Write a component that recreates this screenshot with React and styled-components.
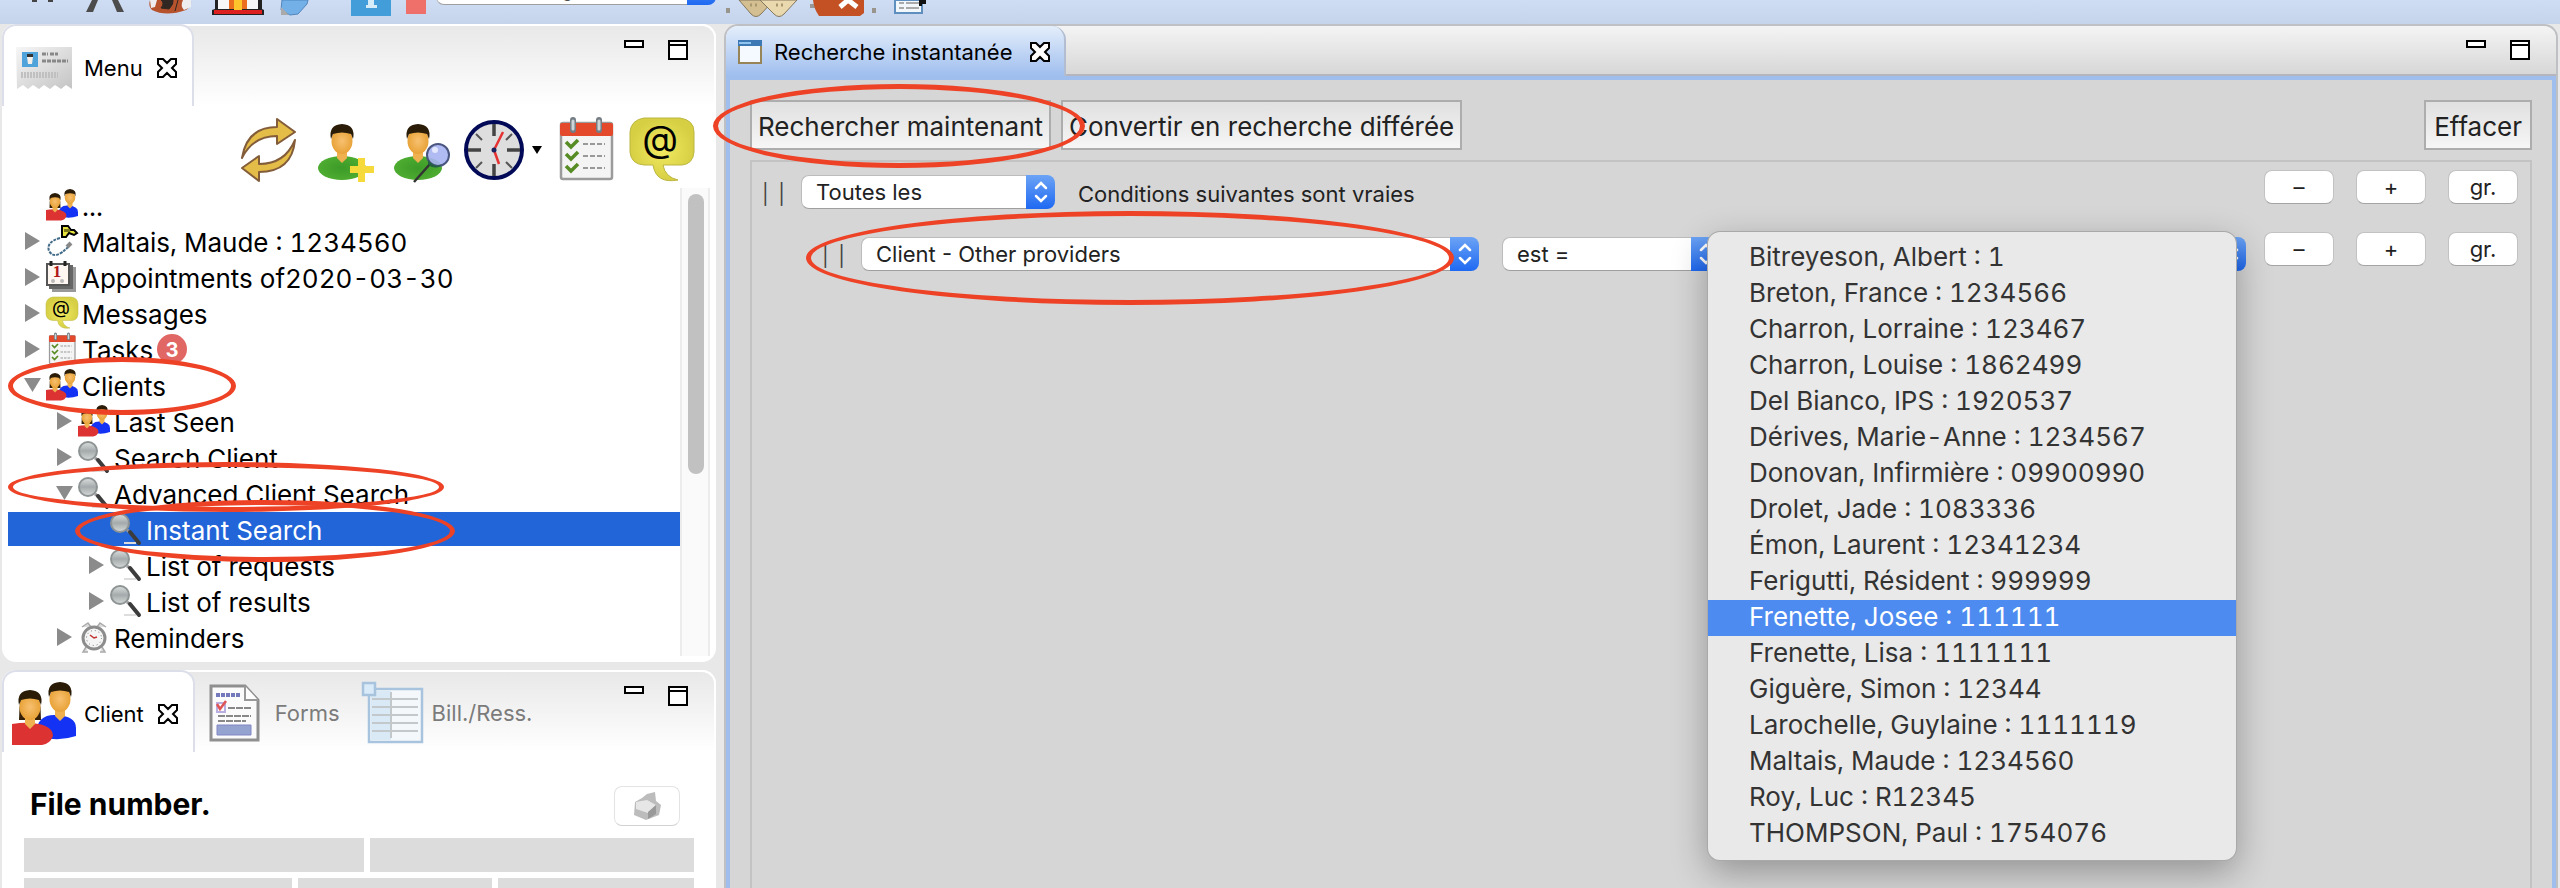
import React, { useState } from 'react';
import styled, { createGlobalStyle, css } from 'styled-components';

const GlobalStyle = createGlobalStyle`
    * {
        box-sizing: border-box;
    }

    body {
        margin: 0;
        background: #e8e8e8;
        color: #000;
        font-family: Inter, "Liberation Sans", sans-serif;
        font-size: 22px;
        line-height: 28px;
    }

    button, select {
        margin: 0;
        padding: 0;
        border: 0;
        background: none;
        color: inherit;
        font: inherit;
    }

    svg {
        display: block;
        flex: none;
        overflow: visible;
    }
`;

const Page = styled.div`
    display: flex;
    flex-direction: column;
    height: 100vh;
    overflow: hidden;
`;

const TopBar = styled.header`
    display: flex;
    flex: none;
    height: 24px;
    padding-left: 8px;
    overflow: hidden;
    background: linear-gradient(#cedcf4, #c5d4eb);
`;

const TopButton = styled.button`
    flex: none;
    width: ${props => props.$width || 64}px;
    height: 24px;
`;

const TopSelect = styled.div`
    display: flex;
    flex: none;
    width: 280px;
    height: 34px;
    margin-top: -29px;
`;

const Workbench = styled.div`
    display: flex;
    flex: 1;
    gap: 8px;
    min-height: 0;
    padding: 0 2px;
`;

const Sidebar = styled.aside`
    display: flex;
    flex: none;
    flex-direction: column;
    gap: 8px;
    width: 714px;
`;

const Panel = styled.section`
    flex: ${props => props.$grow ? '1' : 'none'};
    border-radius: ${props => props.$grow ? '14px 14px 0 0' : '14px'};
    background: #fff;
`;

const TabBar = styled.div`
    display: flex;
    height: 82px;
    border-top: 2px solid #fff;
    border-right: 2px solid #fff;
    border-radius: 14px 14px 0 0;
    background: linear-gradient(#e8e8e8, #fff);
`;

const Tab = styled.button`
    display: flex;
    align-items: center;
    gap: 8px;
    height: 82px;
    margin-top: -2px;
    padding: 4px 12px 0 8px;
    color: #7b7b7b;

    ${props => props.$active && css`
        padding: 4px 15px 0 8px;
        border: 2px solid #dcdfea;
        border-bottom: 0;
        border-radius: 14px 14px 0 0;
        background: #fff;
        color: #000;
    `}
`;

const CloseMark = styled.span`
    margin-left: 6px;
`;

const WindowButtons = styled.div`
    display: flex;
    gap: 24px;
    margin-left: auto;
    padding: 14px 26px 0 0;

    button {
        height: 20px;
    }
`;

const ActionBar = styled.div`
    display: flex;
    justify-content: flex-end;
    gap: 12px;
    padding: 12px 22px 6px 0;

    button {
        height: 64px;
    }
`;

const Caret = styled.button`
    width: 10px;
    margin-left: -6px;
`;

const TreeArea = styled.div`
    display: flex;
    padding: 0 6px 6px;
`;

const Tree = styled.ul`
    flex: 1;
    margin: 0;
    padding: 0;
    list-style: none;
`;

const TreeRow = styled.li`
    position: relative;
    display: flex;
    align-items: center;
    height: 36px;
    padding: 0 0 2px ${props => 16 + props.$level * 32}px;
    font-size: 26px;
    font-variant-numeric: tabular-nums;

    ${props => props.$selected && css`
        background: linear-gradient(#2265d9 34px, #fff 34px);
        color: #fff;
    `}
`;

const Twisty = styled.span`
    flex: none;
    width: 22px;
`;

const TreeLabel = styled.span`
    padding: 3px 0 0 4px;
    white-space: nowrap;
`;

const Badge = styled.span`
    width: 30px;
    height: 30px;
    margin-left: 4px;
    border-radius: 50%;
    background: #e06763;
    color: #fff;
    font-size: 20px;
    font-weight: 700;
    line-height: 32px;
    text-align: center;
`;

const ScrollTrack = styled.div`
    flex: none;
    width: 30px;
    padding: 6px 0 0 6px;
    border: solid #ececec;
    border-width: 0 2px;
    background: #fafafa;
`;

const ScrollThumb = styled.div`
    width: 16px;
    height: 280px;
    border-radius: 8px;
    background: #c1c1c1;
`;

const FileHeader = styled.div`
    display: flex;
    justify-content: space-between;
    padding: 34px 36px 12px 28px;
`;

const FileTitle = styled.h2`
    margin: 0;
    font-size: 30px;
    line-height: 36px;
`;

const PrintButton = styled.button`
    display: flex;
    align-items: center;
    justify-content: center;
    width: 66px;
    height: 40px;
    border: 1px solid #e3e3e3;
    border-bottom-color: #d2d2d2;
    border-radius: 8px;
    background: #fff;
`;

const FieldRow = styled.div`
    display: grid;
    grid-template-columns: ${props => props.$columns};
    gap: 6px;
    height: 34px;
    margin: 0 22px 6px;

    span {
        background: #dcdcdc;
    }
`;

const Editor = styled.main`
    display: flex;
    flex: 1;
    flex-direction: column;
    min-width: 0;
    border: 2px solid #bfc0c4;
    border-bottom: 0;
    border-radius: 14px 14px 0 0;
    background: #d6d6d6;
`;

const EditorTabs = styled.div`
    display: flex;
    flex: none;
    height: 50px;
    border-radius: 12px 12px 0 0;
    background: linear-gradient(#f4f4f4, #d6d6d6);
    box-shadow: inset 0 -2px #b4b5bd;
`;

const EditorTab = styled.button`
    display: flex;
    align-items: center;
    gap: 12px;
    height: 50px;
    padding: 2px 14px 0 12px;
    border-right: 2px solid #b3bdd2;
    border-radius: 12px 14px 0 0;
    background: linear-gradient(#e4eefb, #9fbeee);
`;

const EditorBody = styled.div`
    display: flex;
    flex: 1;
    flex-direction: column;
    padding: 20px 20px 0 20px;
    border: 4px solid #9fbeee;
    border-bottom: 0;
`;

const Commands = styled.div`
    display: flex;
    flex: none;
    gap: 10px;
    margin-bottom: 10px;
`;

const Command = styled.button`
    position: relative;
    height: 50px;
    margin-left: ${props => props.$end ? 'auto' : '0'};
    padding: 4px ${props => props.$end ? 8 : 6}px 0;
    border: 2px solid #adadad;
    background: linear-gradient(#e0e0e0, #f6f6f6);
    color: #222;
    font-size: 26px;
    white-space: nowrap;
`;

const Conditions = styled.div`
    flex: 1;
    border: 2px solid #c3c3c3;
    border-bottom: 0;
`;

const ConditionRow = styled.div`
    display: flex;
    height: 62px;
    padding: 8px 12px 0 ${props => props.$nested ? 70 : 10}px;
    color: #222;
`;

const ConditionFields = styled.div`
    position: relative;
    display: flex;
    flex: 1;
    align-items: center;
    height: 34px;
    margin: 5px 18px 0 0;
`;

const ConditionText = styled.span`
    padding-top: 4px;
`;

const Handle = styled.span`
    flex: none;
    width: 39px;
    padding-top: 4px;
    color: #444;
    font-size: 20px;
    word-spacing: 4px;
`;

const Field = styled.div`
    position: relative;
    display: flex;
    flex: ${props => props.$width ? 'none' : '1'};
    width: ${props => props.$width ? props.$width + 'px' : 'auto'};
    height: 34px;
    margin-right: ${props => props.$last ? 0 : 23}px;
`;

const NativeSelect = styled.select`
    flex: 1;
    min-width: 0;
    padding: 0 14px;
    border: 1px solid #bcbcbc;
    border-right: 0;
    border-bottom-color: #9f9f9f;
    border-radius: 8px 0 0 8px;
    background: #fff;
    color: #222;
    appearance: none;
`;

const Stepper = styled.span`
    display: flex;
    align-items: center;
    justify-content: center;
    width: 29px;
    border-radius: 0 8px 8px 0;
    background: linear-gradient(#6ba3f5, #1f69f2);
`;

const RowButtons = styled.div`
    display: flex;
    gap: 22px;
`;

const RoundButton = styled.button`
    width: 70px;
    height: 34px;
    border: 1px solid #c2c2c2;
    border-bottom-color: #a4a4a4;
    border-radius: 8px;
    background: #fff;
    line-height: 30px;
`;

const Popup = styled.ul`
    position: absolute;
    top: -5px;
    right: 10px;
    z-index: 3;
    width: 528px;
    margin: 0;
    padding: 8px 0;
    border-radius: 12px;
    background: #e9e9e9;
    box-shadow: 0 0 0 1px #a9a9a9, 0 12px 36px rgba(0, 0, 0, 0.32);
    color: #333;
    font-size: 26px;
    font-variant-numeric: tabular-nums;
    line-height: 34px;
    list-style: none;
`;

const PopupItem = styled.li`
    padding: 0 0 2px 41px;
    background: ${props => props.$selected ? '#4d8bf0' : 'transparent'};
    color: ${props => props.$selected ? '#fff' : 'inherit'};
    white-space: nowrap;
`;

// hand-drawn ring around the part the reader should look at
const Ring = styled.span`
    position: absolute;
    top: ${props => props.$top}px;
    left: ${props => props.$left}px;
    z-index: 2;
    width: ${props => props.$width}px;
    height: ${props => props.$height}px;
    border: 5px solid #ee4226;
    border-radius: 50%;
    pointer-events: none;
`;

const Gradients = () => (
    <svg width="0" height="0" style={{ position: 'absolute' }} aria-hidden="true">
        <defs>
            <radialGradient id="skin"><stop offset="0" stopColor="#f8c070" /><stop offset="1" stopColor="#e8a338" /></radialGradient>
            <radialGradient id="green"><stop offset="0" stopColor="#3c9a28" /><stop offset="1" stopColor="#4dac30" /></radialGradient>
            <radialGradient id="yellow"><stop offset="0" stopColor="#f2ea60" /><stop offset="1" stopColor="#d6cf44" /></radialGradient>
            <linearGradient id="glass" x2="0" y2="1"><stop offset="0" stopColor="#dcdfe0" /><stop offset=".5" stopColor="#a4aaab" /><stop offset="1" stopColor="#d6d9da" /></linearGradient>
            <linearGradient id="paper" x2="1" y2="1"><stop offset="0" stopColor="#f6f6f6" /><stop offset="1" stopColor="#c4c4c4" /></linearGradient>
        </defs>
    </svg>
);

const Head = ({ x, y }) => (
    <g transform={`translate(${x} ${y})`}>
        <path d="M-5 22h10v12l-5 5-5-5z" fill="#efb050" />
        <ellipse cx="0" cy="17" rx="10.5" ry="13" fill="url(#skin)" />
        <path d="M-11 15Q-14 1 0 0Q14 1 11 15L9 10Q0 7-9 10z" fill="#2b1c08" />
    </g>
);

const People = ({ size = 32 }) => (
    <svg width={size} height={size} viewBox="0 0 64 64">
        <path d="M24 50Q26 32 44 33Q64 34 64 46V54Q46 60 30 55z" fill="#1432f4" />
        <Head x={48} y={0} />
        <path d="M7 38Q7 26 9 14H27Q29 26 29 38z" fill="#352008" />
        <path d="M0 42Q12 40 20 41Q41 43 41 54Q38 62 30 63H0z" fill="#dc3232" />
        <Head x={18} y={8} />
    </svg>
);

const UserIcon = ({ search }) => (
    <svg width="64" height="64" viewBox="0 0 64 64">
        <ellipse cx="32" cy="50" rx="24" ry="12" fill="url(#green)" />
        <Head x={32} y={6} />
        {search ? (
            <g>
                <path d="M44 46 28 64" stroke="#333" strokeWidth="2.5" />
                <circle cx="52" cy="37" r="11" fill="#a9b4f2" fillOpacity=".9" stroke="#4a5580" strokeWidth="2" />
                <circle cx="49" cy="32" r="3" fill="#e4e8ff" />
                <path d="M42 42q8 9 14 4l-3 3q-7 2-11-3z" fill="#226040" />
            </g>
        ) : (
            <path d="M48 40h7v8h9v7h-9v9h-7v-9h-8v-7h8z" fill="#f6da3c" />
        )}
    </svg>
);

const RefreshIcon = () => (
    <svg width="64" height="64" viewBox="-5 0 64 64" fill="#e3bd48" stroke="#835c3a" strokeWidth="2" strokeLinejoin="round">
        <path d="M3 40Q8 9 38 9V1L56 14 38 26V18Q14 18 3 40z" />
        <path d="M56 22Q53 54 20 54V63L3 50 20 38V46Q46 46 56 22z" />
    </svg>
);

const ClockIcon = () => (
    <svg width="64" height="64" viewBox="0 0 64 64">
        <circle cx="32" cy="32" r="28" fill="#dedede" stroke="#020a58" strokeWidth="4" />
        <path d="M32 6v12M32 46v12M6 32h13M45 32h13" stroke="#444" strokeWidth="3.5" />
        <path d="M14 16l6 6M50 16l-6 6M14 50l6-6M50 50l-6-6" stroke="#555" strokeWidth="2" />
        <path d="M32 32 41 14M32 32l5 14" stroke="#e63232" strokeWidth="2.5" />
        <circle cx="32" cy="32" r="2.5" fill="#1a2460" />
    </svg>
);

const TasksIcon = ({ size = 64 }) => (
    <svg width={size} height={size} viewBox="0 0 64 64">
        <rect x="7" y="5" width="51" height="56" rx="2" fill="#f4f4f4" stroke="#9b9b9b" strokeWidth="2.5" />
        <rect x="6" y="5" width="53" height="13" rx="2" fill="#e4492c" />
        <path d="M19 2v10M45 2v10" stroke="#747d84" strokeWidth="6" strokeLinecap="round" />
        <path d="M19 3v8M45 3v8" stroke="#ccd4d8" strokeWidth="3" strokeLinecap="round" />
        <path d="M12 24l5 5 7-7M12 36l5 5 7-7M12 48l5 5 7-7" fill="none" stroke="#578c24" strokeWidth="3.5" />
        <path d="M29 26h22M29 38h22M29 50h22" stroke="#999" strokeWidth="2" strokeDasharray="5 2" />
    </svg>
);

const MessageIcon = ({ size = 64 }) => (
    <svg width={size} height={size} viewBox="0 0 64 64">
        <path d="M14 0H50Q64 2 64 14V34Q63 46 52 47H33Q35 59 48 62Q26 66 23 47H14Q1 46 0 34V14Q1 2 14 0z" fill="url(#yellow)" stroke="#bdb640" />
        <text x="30" y="34" textAnchor="middle" fontFamily="Inter" fontSize="37" fill="#000">@</text>
    </svg>
);

const Magnifier = () => (
    <svg width="32" height="32" viewBox="0 0 32 32">
        <path d="M14 30h12" stroke="#ddd" strokeWidth="2" />
        <path d="M17 17l4 3" stroke="#999" strokeWidth="3" />
        <path d="M20 19l9 11" stroke="#3c3c3c" strokeWidth="4" strokeLinecap="round" />
        <ellipse cx="10" cy="10" rx="9" ry="9" fill="url(#glass)" stroke="#8e9494" strokeWidth="2" />
    </svg>
);

const CareIcon = () => (
    <svg width="32" height="32" viewBox="0 0 32 32">
        <path d="M14 13Q0 17 3 26Q9 36 23 21" fill="none" stroke="#426b87" strokeWidth="2" strokeDasharray="3 1" />
        <path d="M21 22l4-4" stroke="#888" strokeWidth="4" />
        <path d="M16 1h6l3 4h3l3 3-3 2-5-2-3 4h-4z" fill="#e8e23c" stroke="#000" strokeWidth="2" />
        <path d="M18 4h6v3h-6z" fill="#7d7a20" />
    </svg>
);

const CalendarIcon = () => (
    <svg width="32" height="32" viewBox="0 0 32 32">
        <path d="M6 6h24v25H6z" fill="#999" />
        <path d="M3 4h24v24H3z" fill="#666" />
        <path d="M1 3h22v21H1z" fill="#fff6f2" stroke="#555" strokeWidth="2" />
        <path d="M5 0v5M19 0v5" stroke="#222" strokeWidth="3" />
        <text x="11" y="16" textAnchor="middle" fontFamily="Liberation Serif" fontSize="17" fontWeight="700" fill="#b01818">1</text>
        <circle cx="7" cy="20" r="2" fill="#bbb" /><circle cx="16" cy="20" r="2" fill="#bbb" />
    </svg>
);

const AlarmIcon = () => (
    <svg width="32" height="32" viewBox="0 0 32 32">
        <path d="M4 6l6-4 3 4M28 6l-6-4-3 4M8 26l-3 5h5M24 26l3 5h-5" fill="#ddd" stroke="#aaa" strokeWidth="1.5" />
        <circle cx="16" cy="17" r="11" fill="#f5f5f5" stroke="#8c8c8c" strokeWidth="3" />
        <circle cx="16" cy="17" r="7.5" fill="none" stroke="#777" strokeDasharray="1 3" />
        <path d="M12 14l4 3 3-1" fill="none" stroke="#c23030" strokeWidth="1.5" />
    </svg>
);

const CardIcon = () => (
    <svg width="64" height="44" viewBox="-1 0 64 44">
        <path d="M3 1h56v42l-6-4-5 4-6-4-5 4-6-4-5 4-6-4-5 4-5-4-6 4z" fill="url(#paper)" />
        <path d="M9 6h16v15H9z" fill="#4da3da" />
        <path d="M14 8h6v3l-1 7h-4l-1-7z" fill="#f4efe9" />
        <path d="M14 8h6v3h-6z" fill="#333" />
        <path d="M29 8h6M37 8h8M29 15h26" stroke="#888" strokeWidth="3" strokeDasharray="4 1" />
        <path d="M8 29h37" stroke="#c0c0c0" strokeWidth="6" strokeDasharray="2 1" />
    </svg>
);

const FormIcon = () => (
    <svg width="64" height="64" viewBox="0 0 64 64">
        <path d="M8 5h34l13 14v40H8z" fill="#fbfbfb" stroke="#8f8f8f" strokeWidth="3" />
        <path d="M42 5v14h13" fill="#fff" stroke="#999" strokeWidth="2" />
        <path d="M13 14h24" stroke="#7379bc" strokeWidth="4" strokeDasharray="4 1" />
        <path d="M14 22h8v9h-8z" fill="none" stroke="#b9aee0" strokeWidth="2" />
        <path d="M14 23l3 5 6-8" fill="none" stroke="#df5555" strokeWidth="2.5" />
        <path d="M25 27h24M15 35h33M15 40h28" stroke="#888" strokeWidth="2" strokeDasharray="7 1" />
        <path d="M14 44h34v10H14z" fill="#94a3d0" stroke="#8188c4" />
    </svg>
);

const BillIcon = () => (
    <svg width="64" height="64" viewBox="0 0 64 64">
        <path d="M9 8h53v53H9z" fill="#f5f8fa" stroke="#a8c3de" strokeWidth="2.5" />
        <path d="M11 10h20v49H11z" fill="#d9eaf6" />
        <path d="M12 18h46M12 26h46M12 34h46M12 42h46M12 50h46M31 11v46" stroke="#c3c8cb" strokeWidth="2" />
        <path d="M3 2h12v12H3z" fill="#d9eaf8" stroke="#a8c3de" strokeWidth="2.5" />
    </svg>
);

const Close = () => (
    <CloseMark>
        <svg width="20" height="20" viewBox="0 0 20 20">
            <path d="M1 1h5l4 4 4-4h5v5l-4 4 4 4v5h-5l-4-4-4 4H1v-5l4-4-4-4z" fill="#fff" stroke="#000" strokeWidth="2" />
        </svg>
    </CloseMark>
);

const Arrow = ({ open }) => (
    <svg width="18" height="18" viewBox="0 0 18 18">
        <path d={open ? 'M0 2h17L8.500 16z' : 'M1 0v18L16 9z'} fill="#8b8b8b" />
    </svg>
);

const WindowControls = () => (
    <WindowButtons>
        <button aria-label="Minimize">
            <svg width="20" height="20"><path d="M1 1h18v6H1z" fill="#fff" stroke="#000" strokeWidth="2" /></svg>
        </button>
        <button aria-label="Maximize">
            <svg width="20" height="20"><path d="M1 1h18v18H1zM1 5h18" fill="#fff" stroke="#000" strokeWidth="2" /></svg>
        </button>
    </WindowButtons>
);

const Select = ({ label, value, width, last, children }) => (
    <Field $width={width} $last={last}>
        <NativeSelect aria-label={label} defaultValue={value}>
            <option>{value}</option>
        </NativeSelect>
        <Stepper>
            <svg width="14" height="22" viewBox="0 0 14 22">
                <path d="M2 7l5-5 5 5M2 15l5 5 5-5" fill="none" stroke="#fff" strokeWidth="2.500" strokeLinecap="round" />
            </svg>
        </Stepper>
        {children}
    </Field>
);

const tree = [
    { label: '...', icon: <People />, level: 0, leaf: true },
    { label: 'Maltais, Maude : 1234560', icon: <CareIcon />, level: 0 },
    { label: 'Appointments of2020-03-30', icon: <CalendarIcon />, level: 0 },
    { label: 'Messages', icon: <MessageIcon size={32} />, level: 0 },
    { label: 'Tasks', icon: <TasksIcon size={32} />, level: 0, badge: 3 },
    { label: 'Clients', icon: <People />, level: 0, open: true, ring: { top: -11, left: 0, width: 228, height: 58 } },
    { label: 'Last Seen', icon: <People />, level: 1 },
    { label: 'Search Client', icon: <Magnifier />, level: 1 },
    { label: 'Advanced Client Search', icon: <Magnifier />, level: 1, open: true, ring: { top: -14, left: 0, width: 436, height: 50 } },
    { label: 'Instant Search', icon: <Magnifier />, level: 2, leaf: true, ring: { top: -12, left: 67, width: 380, height: 62 } },
    { label: 'List of requests', icon: <Magnifier />, level: 2 },
    { label: 'List of results', icon: <Magnifier />, level: 2 },
    { label: 'Reminders', icon: <AlarmIcon />, level: 1 },
];

const providers = [
    'Bitreyeson, Albert : 1',
    'Breton, France : 1234566',
    'Charron, Lorraine : 123467',
    'Charron, Louise : 1862499',
    'Del Bianco, IPS : 1920537',
    'Dérives, Marie-Anne : 1234567',
    'Donovan, Infirmière : 09900990',
    'Drolet, Jade : 1083336',
    'Émon, Laurent : 12341234',
    'Ferigutti, Résident : 999999',
    'Frenette, Josee : 111111',
    'Frenette, Lisa : 1111111',
    'Giguère, Simon : 12344',
    'Larochelle, Guylaine : 1111119',
    'Maltais, Maude : 1234560',
    'Roy, Luc : R12345',
    'THOMPSON, Paul : 1754076',
];

const Marker = ({ ring }) => (
    <Ring $top={ring.top} $left={ring.left} $width={ring.width} $height={ring.height} />
);

const TopToolbar = () => (
    <TopBar>
        <TopButton aria-label="Find">
            <svg width="64" height="24"><path d="M24 0h5v2h-5zM40 0h5v2h-5z" fill="#444" /></svg>
        </TopButton>
        <TopButton aria-label="Measure">
            <svg width="64" height="24"><path d="M20 0h6l-5 12h-7zM40 0h6l6 12h-7z" fill="#4c4c4c" /></svg>
        </TopButton>
        <TopButton aria-label="Basket">
            <svg width="64" height="24">
                <path d="M14 0h41q1 6-5 10-20 7-34 0-4-4-2-10z" fill="#b7532c" />
                <path d="M14 0h7l-2 7-4 1zM47 0h8v7l-7 3q-4-4-1-10z" fill="#eee" />
                <path d="M25 0q4 3 0 8l8 1q5-5 4-9M42 0l-3 11" fill="#302722" stroke="#302722" />
            </svg>
        </TopButton>
        <TopButton aria-label="Home">
            <svg width="64" height="24">
                <path d="M15 0h47v9l2 1v5H12v-5l3-1z" fill="#222" />
                <path d="M18 0h11v9H18zM47 0h11v9H47z" fill="#f7f7f7" />
                <path d="M29 0h18v9H29z" fill="#ec6f20" /><path d="M34 0h8v10h-8z" fill="#fdc52c" />
                <path d="M14 10h48v4H14z" fill="#dd2020" />
            </svg>
        </TopButton>
        <TopButton aria-label="Tag">
            <svg width="64" height="24">
                <path d="M18 0h26l-1 4-9 10-8 1-9-5z" fill="#74b0e8" stroke="#4f86bd" />
                <path d="M17 7l8 8h-8z" fill="#aaa" />
            </svg>
        </TopButton>
        <TopButton aria-label="Information">
            <svg width="64" height="24"><path d="M23 0h40v16H23z" fill="#439dd9" /><path d="M40 0h6v5h3v3H38V5h2z" fill="#d7ecf9" /></svg>
        </TopButton>
        <TopButton $width={44} aria-label="Stop">
            <svg width="44" height="24"><path d="M14 0h20v14H14z" fill="#ef6f6b" /></svg>
        </TopButton>
        <TopSelect>
            <Select label="Language" value="Choisir langue" last />
        </TopSelect>
        <TopButton aria-label="Bandages" $width={90}>
            <svg width="90" height="24">
                <path d="M10 8h4v5h-4z" fill="#99958c" />
                <path d="M23 0h35L45 14q-5 5-10 0z" fill="#d3bf91" stroke="#83765c" />
                <path d="M44 0h37l-13 14q-5 5-10 0l-9-9z" fill="#ead9ae" stroke="#83765c" />
                <path d="M34 5h10M60 5h10" stroke="#a8976f" strokeWidth="3" strokeDasharray="2 3" />
            </svg>
        </TopButton>
        <TopButton aria-label="Delete">
            <svg width="64" height="24">
                <path d="M4 4h10v4H4z" fill="#999" />
                <path d="M7 0h51v13l-4 3H13q-5-7-6-16z" fill="#c35124" />
                <path d="M34 7l8-7 9 7" fill="none" stroke="#fff" strokeWidth="5" />
            </svg>
        </TopButton>
        <TopButton aria-label="Report">
            <svg width="64" height="24">
                <path d="M2 8h4v5H2z" fill="#99958c" />
                <path d="M25 0h27v13H25z" fill="#f2f7fb" stroke="#5e8fbe" strokeWidth="2" />
                <path d="M29 3h5M36 3h13M29 8h5M36 8h13" stroke="#aaa" strokeWidth="2" />
                <path d="M49 0h7v4h-4v2h-3z" fill="#111" />
            </svg>
        </TopButton>
    </TopBar>
);

const App = () => {
    const [selected, setSelected] = useState('Instant Search');
    const [provider, setProvider] = useState('Frenette, Josee : 111111');

    return (
        <Page>
            <GlobalStyle />
            <Gradients />
            <TopToolbar />
            <Workbench>
                <Sidebar>
                    <Panel>
                        <TabBar>
                            <Tab $active>
                                <CardIcon />
                                <span>Menu</span>
                                <Close />
                            </Tab>
                            <WindowControls />
                        </TabBar>
                        <ActionBar>
                            <button aria-label="Refresh"><RefreshIcon /></button>
                            <button aria-label="Add client"><UserIcon /></button>
                            <button aria-label="Find client"><UserIcon search /></button>
                            <button aria-label="Schedule"><ClockIcon /></button>
                            <Caret aria-label="Schedule options">
                                <svg width="10" height="10"><path d="M0 1h10L5 9z" /></svg>
                            </Caret>
                            <button aria-label="Tasks"><TasksIcon /></button>
                            <button aria-label="Messages"><MessageIcon /></button>
                        </ActionBar>
                        <TreeArea>
                            <Tree>
                                {tree.map(item => (
                                    <TreeRow
                                        key={item.label}
                                        $level={item.level}
                                        $selected={item.label === selected}
                                        onClick={() => setSelected(item.label)}
                                    >
                                        <Twisty>{!item.leaf && <Arrow open={item.open} />}</Twisty>
                                        {item.icon}
                                        <TreeLabel>{item.label}</TreeLabel>
                                        {item.badge && <Badge>{item.badge}</Badge>}
                                        {item.ring && <Marker ring={item.ring} />}
                                    </TreeRow>
                                ))}
                            </Tree>
                            <ScrollTrack><ScrollThumb /></ScrollTrack>
                        </TreeArea>
                    </Panel>
                    <Panel $grow>
                        <TabBar>
                            <Tab $active>
                                <People size={64} />
                                <span>Client</span>
                                <Close />
                            </Tab>
                            <Tab><FormIcon />Forms</Tab>
                            <Tab><BillIcon />Bill./Ress.</Tab>
                            <WindowControls />
                        </TabBar>
                        <FileHeader>
                            <FileTitle>File number.</FileTitle>
                            <PrintButton aria-label="Print">
                                <svg width="32" height="28" viewBox="0 0 32 28">
                                    <path d="M16 2l8-2 1 9 5 4-2 10-13 5-12-5 1-13 7-4z" fill="#bcbcbc" />
                                    <path d="M5 10l11-2 9 5-8 8-12-4z" fill="#e6e6e6" />
                                    <path d="M17 20l8-7v9l-8 5z" fill="#999" />
                                </svg>
                            </PrintButton>
                        </FileHeader>
                        <FieldRow $columns="340fr 324fr"><span /><span /></FieldRow>
                        <FieldRow $columns="268fr 194fr 196fr"><span /><span /><span /></FieldRow>
                    </Panel>
                </Sidebar>
                <Editor>
                    <EditorTabs>
                        <EditorTab>
                            <svg width="24" height="24" viewBox="0 0 24 24">
                                <path d="M1 1h22v22H1z" fill="#f4faff" stroke="#978457" strokeWidth="2" />
                                <path d="M0 0h24v6H0z" fill="#3c78b4" /><path d="M1 2h12v2H1z" fill="#8fc4ee" />
                            </svg>
                            <span>Recherche instantanée</span>
                            <Close />
                        </EditorTab>
                        <WindowControls />
                    </EditorTabs>
                    <EditorBody>
                        <Commands>
                            <Command>
                                Rechercher maintenant
                                <Marker ring={{ top: -18, left: -39, width: 372, height: 84 }} />
                            </Command>
                            <Command>Convertir en recherche différée</Command>
                            <Command $end>Effacer</Command>
                        </Commands>
                        <Conditions>
                            <ConditionRow>
                                <ConditionFields>
                                    <Handle>| |</Handle>
                                    <Select label="Condition group" value="Toutes les" width={254} />
                                    <ConditionText>Conditions suivantes sont vraies</ConditionText>
                                </ConditionFields>
                                <RowButtons>
                                    <RoundButton>–</RoundButton>
                                    <RoundButton>+</RoundButton>
                                    <RoundButton>gr.</RoundButton>
                                </RowButtons>
                            </ConditionRow>
                            <ConditionRow $nested>
                                <ConditionFields>
                                    <Handle>| |</Handle>
                                    <Select label="Criterion" value="Client - Other providers" width={618} />
                                    <Select label="Operator" value="est =" width={218} />
                                    <Select label="Provider" value={provider} last>
                                        <Popup role="listbox" aria-label="Providers">
                                            {providers.map(name => (
                                                <PopupItem
                                                    key={name}
                                                    role="option"
                                                    aria-selected={name === provider}
                                                    $selected={name === provider}
                                                    onClick={() => setProvider(name)}
                                                >
                                                    {name}
                                                </PopupItem>
                                            ))}
                                        </Popup>
                                    </Select>
                                    <Marker ring={{ top: -26, left: -16, width: 648, height: 94 }} />
                                </ConditionFields>
                                <RowButtons>
                                    <RoundButton>–</RoundButton>
                                    <RoundButton>+</RoundButton>
                                    <RoundButton>gr.</RoundButton>
                                </RowButtons>
                            </ConditionRow>
                        </Conditions>
                    </EditorBody>
                </Editor>
            </Workbench>
        </Page>
    );
};

export default App;
